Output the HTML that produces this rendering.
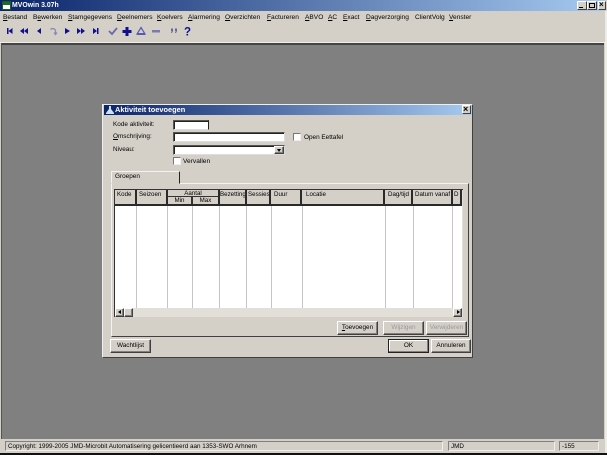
<!DOCTYPE html>
<html><head><meta charset="utf-8"><style>
html,body{margin:0;padding:0;width:607px;height:455px;overflow:hidden;background:#d4d0c8}
#r{position:absolute;left:0;top:0;width:607px;height:455px;overflow:hidden;background:#d4d0c8;font-family:"Liberation Sans",sans-serif;font-size:6.4px;color:#000;filter:blur(.3px)}
#r div,#r span.a{position:absolute;box-sizing:border-box;white-space:nowrap}
.t{line-height:10px}
.m{font-size:6.6px;top:12.500px}
.btn{background:#d4d0c8;border:1px solid;border-color:#fff #404040 #404040 #fff;box-shadow:inset -1px -1px 0 #808080;text-align:center;line-height:12px}
.inp{background:#fff;border:1px solid;border-color:#555 #ddd #ddd #555;box-shadow:inset 1px 1px 0 #222}
.chk{background:#fff;border:1px solid;border-color:#777 #eee #eee #777;width:8px;height:8px}
.hc{background:#d4d0c8;top:190px;height:15px;border-right:2px solid #2a2a2a;line-height:9px;padding-left:2px;font-size:6.2px}
.v{top:206px;height:102px;width:1px;background:#c8c5be}
.ctl{background:#d4d0c8;border:1px solid;border-color:#fff #404040 #404040 #fff;width:10px;height:9px;top:1px}
.st{top:441px;height:10px;border:1px solid;border-color:#808080 #eee #eee #808080;line-height:9.500px;padding-left:2px;font-size:6.3px}
u{text-decoration:underline}
.g{color:#999}
</style></head><body><div id="r">
<!-- title -->
<div style="left:0;top:0;width:605px;height:11px;background:linear-gradient(90deg,#0a246a,#a6caf0)"></div>
<div style="left:2px;top:1px;width:9px;height:9px;background:#fff;border:1px solid #1a5a2a"></div>
<div style="left:3px;top:2px;width:7px;height:3px;background:#1c6b2c"></div>
<div class="t" style="left:12px;top:0.500px;color:#fff;font-weight:bold;font-size:6.9px">MVOwin 3.07h</div>
<div class="ctl" style="left:577px"></div><div style="left:579px;top:7px;width:4px;height:1px;background:#000"></div>
<div class="ctl" style="left:587px"></div><div style="left:589px;top:3px;width:6px;height:5px;border:1px solid #000"></div>
<div class="ctl" style="left:598px;width:8px"></div><div class="t" style="left:599px;top:0;font-size:8px;color:#000;font-weight:bold">×</div>
<!-- menu -->
<div class="t m" style="left:3px"><u>B</u>estand</div>
<div class="t m" style="left:33px">B<u>e</u>werken</div>
<div class="t m" style="left:68px"><u>S</u>tamgegevens</div>
<div class="t m" style="left:117px"><u>D</u>eelnemers</div>
<div class="t m" style="left:157px"><u>K</u>oelvers</div>
<div class="t m" style="left:188px"><u>A</u>larmering</div>
<div class="t m" style="left:225px"><u>O</u>verzichten</div>
<div class="t m" style="left:267px"><u>F</u>actureren</div>
<div class="t m" style="left:305px"><u>A</u>BVO</div>
<div class="t m" style="left:328px"><u>A</u>C</div>
<div class="t m" style="left:343px"><u>E</u>xact</div>
<div class="t m" style="left:366px"><u>D</u>agverzorging</div>
<div class="t m" style="left:415px">ClientVolg</div>
<div class="t m" style="left:449px"><u>V</u>enster</div>
<!-- toolbar -->
<svg style="position:absolute;left:0;top:24px" width="200" height="16" viewBox="0 0 200 16">
<g fill="#10108c">
<path d="M7 4h1.500v6H7zM8.500 7l4-3v6z"/>
<path d="M20 7l4-3v6zM24 7l4-3v6z"/>
<path d="M37 7l4-3v6z"/>
<path d="M65 4l5 3-5 3z"/>
<path d="M77 4l4 3-4 3zM81 4l4 3-4 3z"/>
<path d="M93 4l4 3-4 3zM97 4h1.500v6H97z"/>
<path d="M125.500 3h3v3h3v3h-3v3h-3V9h-3V6h3z"/>
</g>
<path d="M50.500 5.500a3 3 0 0 1 5 1V10M54 8.500l1.500 2 1.500-2" fill="none" stroke="#8a8ab4" stroke-width="1.300"/>
<path d="M109 7l3 3 5-6" fill="none" stroke="#6a6aa8" stroke-width="1.800"/>
<path d="M141 3.500l4 6.500h-8z" fill="#d4d0c8" stroke="#5a5ab0" stroke-width="1.200"/>
<rect x="137" y="9" width="8" height="2" fill="#5a5ab0"/>
<rect x="152" y="6" width="8" height="2.500" fill="#7a7ab8"/>
<path d="M171 4.500h2v2.500l-1 2h-1l.7-2h-.7zM175 4.500h2v2.500l-1 2h-1l.7-2h-.7z" fill="#666690"/>
<text x="184" y="11.500" font-family="Liberation Sans,sans-serif" font-size="11.500" font-weight="bold" fill="#10108c">?</text>
</svg>
<!-- MDI -->
<div style="left:0;top:42px;width:605px;height:1px;background:#f0eee8"></div>
<div style="left:1px;top:43px;width:603px;height:396px;background:#808080;border-top:2px solid #444;border-left:1px solid #555"></div>
<div style="left:605px;top:11px;width:2px;height:444px;background:#eeece6"></div>
<!-- status -->
<div style="left:0;top:439px;width:605px;height:14px;background:#d4d0c8"></div>
<div class="st" style="left:5px;width:438px">Copyright: 1999-2005 JMD-Microbit Automatisering gelicentieerd aan 1353-SWO Arhnem</div>
<div class="st" style="left:448px;width:107px">JMD</div>
<div class="st" style="left:559px;width:40px">-155</div>
<div style="left:0;top:453px;width:607px;height:2px;background:#111"></div>
<!-- dialog -->
<div style="left:102px;top:104px;width:371px;height:254px;background:#d4d0c8;border:1px solid;border-color:#eee #404040 #404040 #eee"></div>
<div style="left:104px;top:105px;width:368px;height:10px;background:linear-gradient(90deg,#0a246a,#a6caf0)"></div>
<svg style="position:absolute;left:105px;top:105px" width="10" height="10"><path d="M4 1h2v3l3 4v1H1V8l3-4z" fill="#cfe0ff"/></svg>
<div class="t" style="left:115px;top:105px;color:#fff;font-weight:bold;font-size:7.4px">Aktiviteit toevoegen</div>
<div class="ctl" style="left:462px;top:105px;width:9px;height:9px"></div><div class="t" style="left:463px;top:104px;font-size:9px;color:#000;font-weight:bold">×</div>
<div class="t" style="left:113px;top:120px">Kode aktiviteit:</div>
<div class="t" style="left:113px;top:132px"><u>O</u>mschrijving:</div>
<div class="t" style="left:113px;top:145px">Niveau:</div>
<div class="inp" style="left:173px;top:120px;width:36px;height:10px;border-right-color:#222"></div>
<div class="inp" style="left:173px;top:132px;width:112px;height:10px"></div>
<div class="inp" style="left:173px;top:145px;width:112px;height:10px"></div>
<div class="btn" style="left:274px;top:146px;width:10px;height:8px"></div>
<div style="left:277px;top:149px;border:2px solid transparent;border-top:3px solid #000;border-bottom:0"></div>
<div class="chk" style="left:173px;top:157px"></div>
<div class="t" style="left:183px;top:156.500px;font-size:6.6px">Vervallen</div>
<div class="chk" style="left:293px;top:133px"></div>
<div class="t" style="left:304px;top:132.500px">Open Eettafel</div>
<!-- tab panel -->
<div style="left:111px;top:183px;width:358px;height:154px;background:#d4d0c8;border:1px solid;border-color:#f4f2ee #404040 #404040 #f4f2ee"></div>
<div style="left:111px;top:171px;width:69px;height:13px;background:#d4d0c8;border:1px solid;border-color:#f4f2ee #222 #d4d0c8 #f4f2ee;line-height:10.500px;padding-left:3px;border-radius:1px 1px 0 0">Groepen</div>
<!-- grid -->
<div style="left:114px;top:189px;width:349px;height:128px;background:#e2dfd8;border-left:1px solid #333;border-top:1px solid #333"></div>
<div style="left:115px;top:205px;width:347px;height:103px;background:#fff"></div>
<div class="hc" style="left:115px;width:22px">Kode</div>
<div class="hc" style="left:137px;width:31px">Seizoen</div>
<div class="hc" style="left:168px;width:52px;text-align:center;padding:0;line-height:7px">Aantal</div>
<div style="left:168px;top:196px;width:50px;height:1px;background:#333"></div>
<div style="left:191px;top:196px;width:2px;height:9px;background:#333"></div>
<div class="t" style="left:168px;top:196px;width:23px;text-align:center;font-size:6.2px">Min</div>
<div class="t" style="left:193px;top:196px;width:25px;text-align:center;font-size:6.2px">Max</div>
<div class="hc" style="left:220px;width:27px;padding-left:0;overflow:hidden">Bezetting</div>
<div class="hc" style="left:247px;width:24px;padding-left:1px;overflow:hidden">Sessies</div>
<div class="hc" style="left:271px;width:31px;padding-left:3px">Duur</div>
<div class="hc" style="left:302px;width:83px;padding-left:4px">Locatie</div>
<div class="hc" style="left:385px;width:28px;padding-left:3px;overflow:hidden">Dag/tijd</div>
<div class="hc" style="left:413px;width:40px;padding-left:2px;overflow:hidden">Datum vanaf</div>
<div class="hc" style="left:453px;width:9px;padding-left:1px;overflow:hidden">D</div>
<div style="left:115px;top:204px;width:347px;height:2px;background:#2a2a2a"></div>
<div class="v" style="left:136px"></div><div class="v" style="left:167px"></div><div class="v" style="left:192px"></div><div class="v" style="left:219px"></div><div class="v" style="left:246px"></div><div class="v" style="left:271px"></div><div class="v" style="left:302px"></div><div class="v" style="left:385px"></div><div class="v" style="left:413px"></div><div class="v" style="left:452px"></div>
<div class="btn" style="left:115px;top:308px;width:9px;height:9px"></div>
<div style="left:118px;top:310px;border:2.500px solid transparent;border-right:3px solid #000;border-left:0"></div>
<div class="btn" style="left:124px;top:308px;width:9px;height:9px"></div>
<div class="btn" style="left:453px;top:308px;width:9px;height:9px"></div>
<div style="left:457px;top:310px;border:2.500px solid transparent;border-left:3px solid #000;border-right:0"></div>
<!-- buttons -->
<div class="btn" style="left:337px;top:321px;width:41px;height:14px"><u>T</u>oevoegen</div>
<div class="btn g" style="left:383px;top:321px;width:41px;height:14px">Wijzigen</div>
<div class="btn g" style="left:426px;top:321px;width:41px;height:14px">Verwijderen</div>
<div class="btn" style="left:110px;top:339px;width:41px;height:14px">Wachtlijst</div>
<div class="btn" style="left:388px;top:339px;width:41px;height:14px;border:1px solid #222;box-shadow:inset -1px -1px 0 #808080,inset 1px 1px 0 #fff">OK</div>
<div class="btn" style="left:431px;top:339px;width:40px;height:14px">Annuleren</div>
</div></body></html>
